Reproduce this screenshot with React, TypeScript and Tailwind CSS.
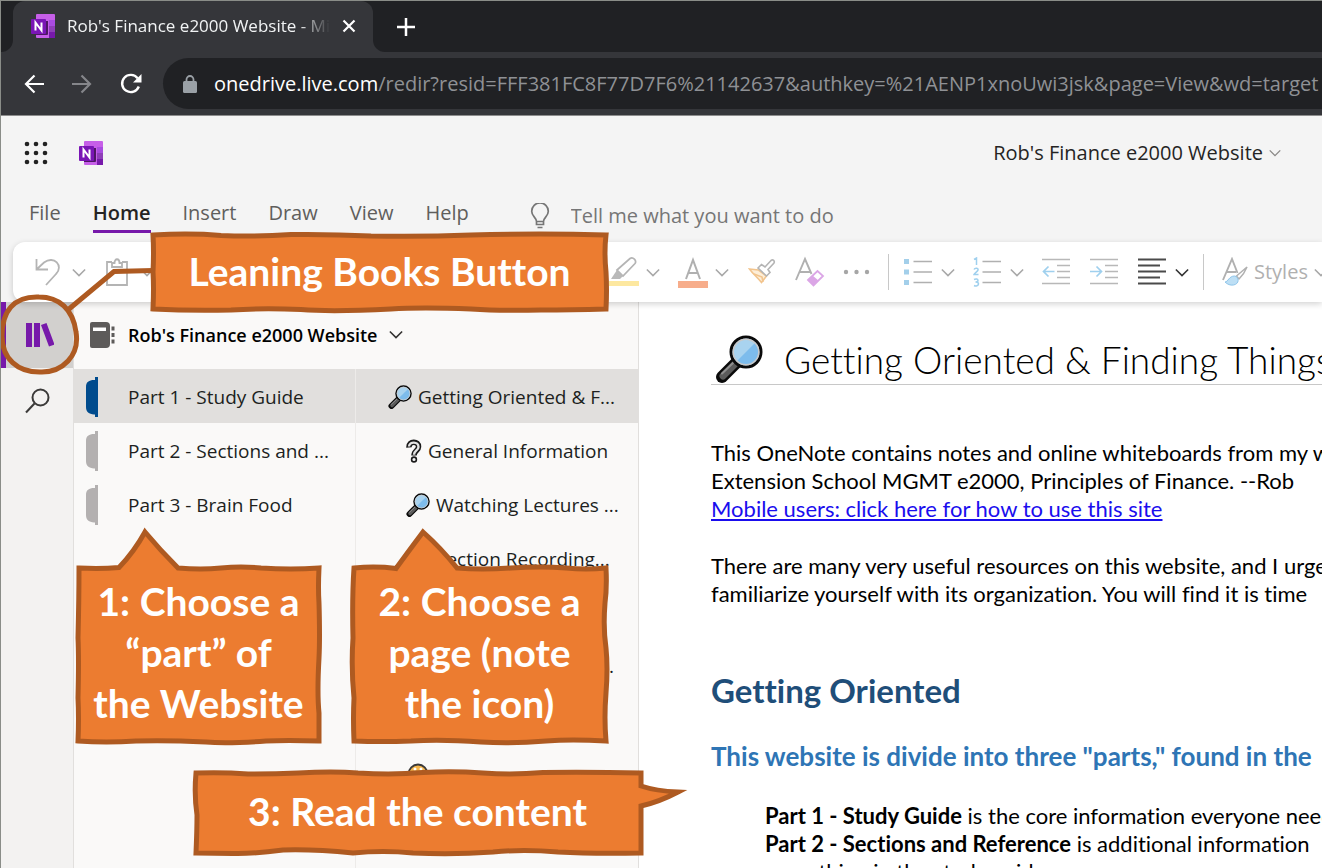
import type { ReactNode } from "react";

const UI = "font-['Open_Sans',sans-serif]";
const DOC = "font-['Lato',sans-serif] [font-variant-ligatures:none]";

function OneNoteLogo({ className }: { className: string }) {
  return (
    <svg viewBox="0 0 24 24" className={className} aria-hidden="true">
      <rect x="5" y="0" width="19" height="24" rx="1" fill="#c65fe8" />
      <rect x="18" y="6" width="6" height="6" fill="#a94be0" />
      <rect x="18" y="12" width="6" height="6" fill="#8f3fb8" />
      <rect x="18" y="18" width="6" height="6" fill="#7719aa" />
      <path d="M5 7h12v13a1 1 0 0 1-1 1H5z" fill="#4d1763" />
      <rect x="0" y="5" width="15" height="15" rx="1" fill="#7a15b5" />
      <path d="M4.500 16.500V8.500L10.500 16.500V8.500" fill="none" stroke="#fff" strokeWidth="2" />
    </svg>
  );
}

function Chevron({ className }: { className: string }) {
  return (
    <svg viewBox="0 0 16 10" className={className} fill="none" stroke="currentColor" strokeWidth="1.800" aria-hidden="true">
      <path d="M1 1.500l7 7 7-7" />
    </svg>
  );
}

function Magnifier({ className }: { className: string }) {
  return (
    <svg viewBox="0 0 48 48" className={className} aria-hidden="true">
      <path d="M22 27L7 42" stroke="#0a0a0a" strokeWidth="12" strokeLinecap="round" />
      <path d="M21 28L8 41" stroke="#5b5b5b" strokeWidth="7" strokeLinecap="round" />
      <path d="M19 27L7 38.500" stroke="#8f8f8f" strokeWidth="2" strokeLinecap="round" />
      <circle cx="31" cy="17" r="15" fill="#a9d3ef" stroke="#0a0a0a" strokeWidth="3" />
      <path d="M21.800 26.200L40.200 7.800A13 13 0 0 1 21.800 26.200z" fill="#7dbcec" />
      <circle cx="31" cy="17" r="12.800" fill="none" stroke="#c9c9c9" strokeWidth="1.500" />
    </svg>
  );
}

function QuestionMark() {
  return (
    <svg viewBox="0 0 16 24" className="h-6 w-4" aria-hidden="true">
      <path d="M3 8.500C2.500 1.500 13 1.500 12.500 8c0 3.500-4.500 3.500-4.500 8.500" fill="none" stroke="#1a1a1a" strokeWidth="5.500" />
      <path d="M3 7.500C3.500 2.200 12.500 2.200 12.500 8c0 3.500-4.500 3.500-4.500 7.700" fill="none" stroke="#e4e4e4" strokeWidth="2.400" />
      <circle cx="8" cy="20.500" r="2.400" fill="#f4f4f4" stroke="#1a1a1a" strokeWidth="1.600" />
    </svg>
  );
}

function Face() {
  return (
    <svg viewBox="0 0 22 22" className="size-[22px]" aria-hidden="true">
      <circle cx="11" cy="11" r="9.500" fill="#f5b54a" stroke="#3a3a3a" strokeWidth="1.800" />
      <circle cx="8" cy="6" r="1.500" fill="#fff" />
      <circle cx="14" cy="6" r="1.500" fill="#fff" />
    </svg>
  );
}

function SectionTab({ className }: { className: string }) {
  return (
    <svg viewBox="0 0 14 40" className={className} fill="currentColor" aria-hidden="true">
      <path d="M10 0h3v40h-3v-2.500H9C4 37 1 35 1 30V10C1 5 4 3 9 3h1z" />
    </svg>
  );
}

function BrowserBar() {
  return (
    <header className={`shrink-0 text-white ${UI}`}>
      <div className="flex h-[51px] items-center bg-[#202124]">
        <div className="h-full w-3 shrink-0 bg-[#35363a]">
          <div className="h-full rounded-br-[12px] bg-[#202124]" />
        </div>
        <div className="flex h-full w-[360px] shrink-0 items-center rounded-t-[12px] bg-[#35363a] pb-[2px] pl-[18px] pr-[17px]">
          <OneNoteLogo className="size-6 shrink-0" />
          <span className="ml-3 flex-1 overflow-hidden whitespace-nowrap text-[17px] leading-6 text-[#f1f3f4] [mask-image:linear-gradient(to_right,black_88%,transparent)]">
            Rob's Finance e2000 Website - Microsoft OneNote Online
          </span>
          <button aria-label="Close tab" className="ml-3 shrink-0">
            <svg viewBox="0 0 14 14" className="size-[14px]" stroke="#fff" strokeWidth="2.200" aria-hidden="true">
              <path d="M1.500 1.500l11 11M12.500 1.500l-11 11" />
            </svg>
          </button>
        </div>
        <div className="h-full flex-1 bg-[#35363a]">
          <div className="flex h-full items-center rounded-bl-[12px] bg-[#202124] pl-6">
            <button aria-label="New tab">
              <svg viewBox="0 0 18 18" className="size-[18px]" stroke="#fff" strokeWidth="2.500" aria-hidden="true">
                <path d="M9 0v18M0 9h18" />
              </svg>
            </button>
          </div>
        </div>
      </div>
      <div className="flex h-16 items-center border-b border-[#8d8d8d] bg-[#35363a] pl-[23px]">
        <button aria-label="Back" className="shrink-0">
          <svg viewBox="0 0 20 20" className="size-5" fill="none" stroke="#fff" strokeWidth="2.200" aria-hidden="true">
            <path d="M20 10H2M10.500 1.500L2 10l8.500 8.500" />
          </svg>
        </button>
        <button aria-label="Forward" className="ml-7 shrink-0">
          <svg viewBox="0 0 20 20" className="size-5" fill="none" stroke="#85868a" strokeWidth="2.200" aria-hidden="true">
            <path d="M0 10h18M9.500 1.500L18 10l-8.500 8.500" />
          </svg>
        </button>
        <button aria-label="Reload" className="ml-7 shrink-0">
          <svg viewBox="0 0 22 22" className="size-[22px]" fill="none" stroke="#fff" strokeWidth="2.400" aria-hidden="true">
            <path d="M18.800 13.500A8.600 8.600 0 1 1 17.600 5.300" />
            <path d="M21.500 1v8.500H13z" fill="#fff" stroke="none" />
          </svg>
        </button>
        <div className="ml-[21px] flex h-[51px] flex-1 items-center overflow-hidden rounded-l-full bg-[#202124] pl-5">
          <svg viewBox="0 0 14 18" className="h-[18px] w-[14px] shrink-0" aria-hidden="true">
            <rect x="0" y="6" width="14" height="12" rx="1.500" fill="#9aa0a6" />
            <path d="M3.500 7V4.500a3.500 3.500 0 0 1 7 0V7" fill="none" stroke="#9aa0a6" strokeWidth="1.800" />
          </svg>
          <span className="ml-[17px] whitespace-nowrap text-[20px] leading-7 text-[#8f9195]">
            <span className="text-white">onedrive.live.com</span>
            /redir?resid=FFF381FC8F77D7F6%21142637&amp;authkey=%21AENP1xnoUwi3jsk&amp;page=View&amp;wd=target
          </span>
        </div>
      </div>
    </header>
  );
}

function AppHeader() {
  const item = "shrink-0 text-[20px] leading-7 text-[#605e5c]";
  return (
    <div className={`shrink-0 bg-[#f4f4f4] ${UI}`}>
      <div className="flex h-[74px] items-center pl-[23px] pr-[41px]">
        <button aria-label="App launcher">
          <svg viewBox="0 0 24 24" className="size-6" fill="#222" aria-hidden="true">
            {[3, 12, 21].map((y) =>
              [3, 12, 21].map((x) => <circle key={`${x}-${y}`} cx={x} cy={y} r="2.300" />)
            )}
          </svg>
        </button>
        <OneNoteLogo className="ml-[31px] size-6" />
        <button className="ml-auto flex items-center gap-[6px] whitespace-nowrap text-[20px] leading-7 text-[#252423]">
          Rob's Finance e2000 Website
          <Chevron className="h-2 w-3 text-[#8a8886]" />
        </button>
      </div>
      <nav className="flex h-[52px] items-start pl-7 pt-[9px]">
        <button className={item}>File</button>
        <button className="ml-8 shrink-0 border-b-[3px] border-[#7719aa] pb-[3px] text-[20px] font-semibold leading-7 text-[#252423]">
          Home
        </button>
        <button className={`ml-8 ${item}`}>Insert</button>
        <button className={`ml-8 ${item}`}>Draw</button>
        <button className={`ml-8 ${item}`}>View</button>
        <button className={`ml-8 ${item}`}>Help</button>
        <label className="ml-[61px] flex min-w-0 flex-1 items-center gap-[21px] pt-px">
          <svg viewBox="0 0 20 26" className="h-[26px] w-5 shrink-0" fill="none" stroke="#767676" strokeWidth="1.700" aria-hidden="true">
            <path d="M6.500 18.500c0-4-4.800-5-4.800-10.300a8.300 8.300 0 0 1 16.600 0c0 5.300-4.800 6.300-4.800 10.300zM6.500 18.500v3h7v-3M7.500 24.500h5" />
          </svg>
          <input
            aria-label="Tell me what you want to do"
            placeholder="Tell me what you want to do"
            className="h-8 w-full bg-transparent text-[20px] leading-8 text-[#555] outline-none placeholder:text-[#767676]"
          />
        </label>
      </nav>
    </div>
  );
}

function Lines({ indent }: { indent: "out" | "in" }) {
  return (
    <svg viewBox="0 0 28 28" className="size-7" fill="none" aria-hidden="true">
      <path d="M0 1.500h28M15 7.500h13M15 13.500h13M15 19.500h13M0 25.500h28" stroke="#b8b8b8" strokeWidth="1.700" />
      <path d={indent === "out" ? "M12.500 13.500H2M6.500 8.500l-5 5 5 5" : "M0 13.500h11M6.500 8.500l5 5-5 5"} stroke="#9fd0ee" strokeWidth="1.700" />
    </svg>
  );
}

function Ribbon() {
  const chev = "h-[9px] w-[14px] text-[#a8a8a8]";
  return (
    <div className="relative z-10 shrink-0 bg-[#f4f4f4] pl-3">
      <div
        role="toolbar"
        aria-label="Home"
        className={`flex h-[60px] items-center overflow-hidden rounded-l-[12px] bg-white pl-[21px] shadow-[0_2px_6px_rgba(0,0,0,0.18)] ${UI}`}
      >
        <button aria-label="Undo" className="flex shrink-0 items-center gap-[10px]">
          <svg viewBox="0 0 28 28" className="size-7" fill="none" stroke="#b4b4b4" strokeWidth="1.800" aria-hidden="true">
            <path d="M2.500 1v10.500H14M2.500 11.500L10 4.500C20-3 30 8 22 16L12 27" />
          </svg>
          <Chevron className={chev} />
        </button>
        <button aria-label="Paste" className="ml-5 flex shrink-0 items-center gap-3">
          <svg viewBox="0 0 22 28" className="h-7 w-[22px]" fill="none" stroke="#b4b4b4" strokeWidth="1.800" aria-hidden="true">
            <path d="M6 4H1v23h20V4h-5M6 9V5h2.500c0-5 5-5 5 0H16v4z" />
          </svg>
          <Chevron className={chev} />
        </button>
        <button aria-label="Highlighter" className="ml-[455px] flex shrink-0 items-center gap-[7px]">
          <svg viewBox="0 0 30 32" className="h-8 w-[30px]" fill="none" aria-hidden="true">
            <rect x="0" y="25" width="30" height="5" fill="#fde8a0" />
            <path d="M8 14L21 2.500c3-2 7 2 5 5L14 20z" stroke="#b4b4b4" strokeWidth="1.700" />
            <path d="M8 14l6 6-3 3H2z" fill="#b9b9b9" />
          </svg>
          <Chevron className={chev} />
        </button>
        <button aria-label="Font colour" className="ml-[18px] flex shrink-0 items-center gap-[7px]">
          <svg viewBox="0 0 30 32" className="h-8 w-[30px]" fill="none" aria-hidden="true">
            <rect x="0" y="25" width="30" height="7" fill="#f7ad8b" />
            <path d="M8 23L15 4l7 19M10.500 17h9" stroke="#b0b0b0" strokeWidth="2" />
          </svg>
          <Chevron className={chev} />
        </button>
        <button aria-label="Format painter" className="ml-[19px] shrink-0">
          <svg viewBox="0 0 28 26" className="h-[26px] w-7" fill="none" strokeWidth="1.600" aria-hidden="true">
            <path d="M1.500 10l9 1 8 6-5 6.500C9 18 5 15 1.500 10z" fill="#fdeed8" stroke="#f2c48d" />
            <path d="M6 15l8 3 1 5" stroke="#f2c48d" />
            <path d="M10 9l3.500-3.500L17 8l6-6.500c2-1.500 4 .5 3 2.500l-6 6.500 2 3-3.500 3.500z" fill="#fff" stroke="#b4b4b4" />
          </svg>
        </button>
        <button aria-label="Clear formatting" className="ml-[19px] shrink-0">
          <svg viewBox="0 0 30 32" className="h-8 w-[30px]" fill="none" aria-hidden="true">
            <path d="M1 24L10 3l6.500 15M4.500 16h11" stroke="#b0b0b0" strokeWidth="1.900" />
            <path d="M13 24L22.500 15l5.500 5-9.500 9.500z" fill="#fff" stroke="#dba6e6" strokeWidth="1.800" />
            <path d="M13 24l4.500-4.500 6 5-5 5z" fill="#dba6e6" />
          </svg>
        </button>
        <button aria-label="More font options" className="ml-[18px] shrink-0">
          <svg viewBox="0 0 28 6" className="h-[6px] w-7" fill="#a6a6a6" aria-hidden="true">
            <circle cx="3" cy="3" r="2.200" />
            <circle cx="13.500" cy="3" r="2.200" />
            <circle cx="24" cy="3" r="2.200" />
          </svg>
        </button>
        <div className="ml-[17px] h-9 w-px shrink-0 bg-[#c8c8c8]" />
        <button aria-label="Bullets" className="ml-[15px] flex shrink-0 items-center gap-[9px]">
          <svg viewBox="0 0 28 28" className="size-7" aria-hidden="true">
            <path d="M0 1h5v5H0zM0 11.500h5v5H0zM0 22h5v5H0z" fill="#a3cfea" />
            <path d="M9.500 3.500H28M9.500 14H28M9.500 24.500H28" stroke="#b0b0b0" strokeWidth="1.700" />
          </svg>
          <Chevron className={chev} />
        </button>
        <button aria-label="Numbering" className="ml-[18px] flex shrink-0 items-center gap-[9px]">
          <svg viewBox="0 0 28 30" className="h-[30px] w-7" aria-hidden="true">
            <g fill="none" stroke="#9fd0ee" strokeWidth="1.500">
              <path d="M1 2.500L3.500 1v7M1 12.500c1-2 4.500-1.500 4 .5-.3 1.500-3.500 3-4 4.500h4.500M1 22.500c2-1 4-.5 4 1s-2 1.500-2.500 1.500c2 0 3 .5 3 2s-2.500 2.500-4.500 1.500" />
            </g>
            <path d="M9.500 4.500H28M9.500 15H28M9.500 25.500H28" stroke="#b0b0b0" strokeWidth="1.700" />
          </svg>
          <Chevron className={chev} />
        </button>
        <button aria-label="Decrease indent" className="ml-[18px] shrink-0">
          <Lines indent="out" />
        </button>
        <button aria-label="Increase indent" className="ml-5 shrink-0">
          <Lines indent="in" />
        </button>
        <button aria-label="Align" className="ml-5 flex shrink-0 items-center gap-[9px]">
          <svg viewBox="0 0 28 28" className="size-7" stroke="#4a4a4a" strokeWidth="1.900" aria-hidden="true">
            <path d="M0 1.500h28M0 7.500h22M0 13.500h28M0 19.500h22M0 25.500h28" />
          </svg>
          <Chevron className="h-[9px] w-[14px] text-[#333]" />
        </button>
        <div className="ml-[14px] h-9 w-px shrink-0 bg-[#c8c8c8]" />
        <button className="ml-[18px] flex shrink-0 items-center gap-[6px] text-[20px] leading-7 text-[#b0b0b0]">
          <svg viewBox="0 0 26 30" className="h-[30px] w-[26px]" fill="none" aria-hidden="true">
            <path d="M1 23L10 2l5.500 14M5 15h9" stroke="#b0b0b0" strokeWidth="1.900" />
            <path d="M25 10L14.500 19l2.500 3c3-3 6-7 8-12z" fill="#fff" stroke="#b0b0b0" strokeWidth="1.500" />
            <path d="M3 25c3 0 4-6 9.500-6 5 1 5 8-1 9-3 .5-6-.5-8.500-3z" fill="#bddff5" stroke="#8fc5ea" />
          </svg>
          Styles
          <Chevron className={chev} />
        </button>
      </div>
    </div>
  );
}

const sections = ["Part 1 - Study Guide", "Part 2 - Sections and ...", "Part 3 - Brain Food"];

const pages: { title: string; icon: ReactNode; level: 0 | 1 }[] = [
  { title: "Getting Oriented & F...", icon: <Magnifier className="size-6" />, level: 0 },
  { title: "General Information", icon: <QuestionMark />, level: 1 },
  { title: "Watching Lectures ...", icon: <Magnifier className="size-6" />, level: 1 },
  { title: "Section Recording...", icon: <Magnifier className="size-6" />, level: 1 },
];

function Navigation() {
  return (
    <>
      <nav aria-label="Views" className="w-[73px] shrink-0 border-r border-[#e1dfdd] bg-[#f3f2f1]">
        <button
          aria-label="Navigation"
          className="flex h-[66px] w-full items-center border-l-[5px] border-[#7719aa] bg-[#d2d0ce] pl-5"
        >
          <svg viewBox="0 0 28 26" className="h-[26px] w-7" fill="#7719aa" aria-hidden="true">
            <path d="M0 1h6v24H0zM8 1h6v24H8zM15 3l5.500-2 8 21.500-5.500 2z" />
          </svg>
        </button>
        <button aria-label="Search" className="flex h-[66px] w-full items-center pl-6">
          <svg viewBox="0 0 26 26" className="size-[26px]" fill="none" stroke="#3b3a39" strokeWidth="2" aria-hidden="true">
            <circle cx="15.500" cy="9.500" r="8" />
            <path d="M9.500 15.500L1 24.500" />
          </svg>
        </button>
      </nav>
      <aside className={`flex w-[565px] shrink-0 flex-col border-r border-[#e1dfdd] bg-[#faf9f8] text-black ${UI}`}>
        <button className="flex h-[67px] shrink-0 items-center pb-[2px] pl-4 text-[18px] font-semibold leading-7">
          <svg viewBox="0 0 26 26" className="h-[26px] w-[26px]" aria-hidden="true">
            <path d="M2 0h14a4 4 0 0 1 4 4v18a4 4 0 0 1-4 4H2a2 2 0 0 1-2-2V2a2 2 0 0 1 2-2z" fill="#5d5b5a" />
            <path d="M3 5.500h13v3.500H3z" fill="#fff" />
            <path d="M21.500 4.500h3v4h-3zM21.500 11h3v4h-3zM21.500 17.500h3v4h-3z" fill="#5d5b5a" />
          </svg>
          <span className="ml-3 whitespace-nowrap">Rob's Finance e2000 Website</span>
          <Chevron className="ml-3 h-[9px] w-[14px] text-[#323130]" />
        </button>
        <div className="grid flex-1 grid-cols-2 whitespace-nowrap text-[19px] leading-7 text-[#201f1e]">
          <ul aria-label="Sections" className="min-w-0 border-r border-[#edebe9]">
            {sections.map((name, i) => (
              <li key={name}>
                <button
                  className={`flex h-[54px] w-full items-center pl-[11px] pt-px text-left ${i === 0 ? "bg-[#e1dfdd]" : ""}`}
                >
                  <SectionTab className={`h-10 w-[14px] shrink-0 ${i === 0 ? "text-[#004b8d]" : "text-[#b3b0b0]"}`} />
                  <span className="ml-[29px]">{name}</span>
                </button>
              </li>
            ))}
          </ul>
          <ul aria-label="Pages" className="min-w-0">
            {pages.map((page, i) => (
              <li key={page.title}>
                <button
                  className={`flex h-[54px] w-full items-center gap-[6px] pt-px text-left ${
                    page.level === 0 ? "pl-8" : "pl-[50px]"
                  } ${i === 0 ? "bg-[#e1dfdd]" : ""}`}
                >
                  <span className="shrink-0">{page.icon}</span>
                  <span>{page.title}</span>
                </button>
              </li>
            ))}
            <li className="h-[54px]" />
            <li className="flex h-[54px] items-center justify-end pr-6">...</li>
            <li className="h-[54px]" />
            <li className="flex h-[54px] items-center pl-[51px]">
              <Face />
            </li>
          </ul>
        </div>
      </aside>
    </>
  );
}

function Page() {
  return (
    <main className={`min-w-0 flex-1 overflow-hidden whitespace-nowrap bg-white pl-[72px] text-[22px] leading-[28px] text-black ${DOC}`}>
      <div className="flex h-[83px] items-end border-b border-[#c8c8c8] pb-px">
        <Magnifier className="ml-1 size-12 shrink-0" />
        <h1 className="ml-[21px] text-[37px] font-light leading-[46px]">Getting Oriented &amp; Finding Things</h1>
      </div>
      <p className="mt-[54px]">
        This OneNote contains notes and online whiteboards from my work
        <br />
        Extension School MGMT e2000, Principles of Finance. --Rob
      </p>
      <p>
        <a href="#mobile" className="text-[#1a0dee] underline">
          Mobile users: click here for how to use this site
        </a>
      </p>
      <p className="mt-[29px]">
        There are many very useful resources on this website, and I urge
        <br />
        familiarize yourself with its organization. You will find it is time
      </p>
      <h2 className="mt-[62px] text-[33px] font-bold leading-10 text-[#1f4e79]">Getting Oriented</h2>
      <h3 className="mt-7 text-[26px] font-bold leading-9 text-[#2e75b5]">
        This website is divide into three "parts," found in the
      </h3>
      <p className="mt-7 pl-[54px]">
        <b>Part 1 - Study Guide</b> is the core information everyone needs
        <br />
        <b>Part 2 - Sections and Reference</b> is additional information
        <br />
        everything in the study guide
      </p>
    </main>
  );
}

function Callout({ box, view, path, children }: { box: string; view: string; path: string; children: ReactNode }) {
  return (
    <div className={`absolute ${box}`}>
      <svg viewBox={view} className="absolute inset-0 size-full overflow-visible" aria-hidden="true">
        <path d={path} fill="#ec7c30" stroke="#ae5a21" strokeWidth="5" />
      </svg>
      <div className="relative whitespace-nowrap text-center text-[39px] font-bold leading-[51px] text-white">{children}</div>
    </div>
  );
}

export default function App() {
  return (
    <div className="relative flex h-screen flex-col overflow-hidden border-l border-t border-[#8a8d88] bg-white">
      <BrowserBar />
      <AppHeader />
      <Ribbon />
      <div className="flex min-h-0 flex-1">
        <Navigation />
        <Page />
      </div>

      <div className={`pointer-events-none absolute inset-0 z-20 ${DOC}`}>
        <svg viewBox="0 0 155 110" className="absolute left-0 top-[265px] h-[110px] w-[155px]" fill="none" stroke="#ae5a21" strokeWidth="5" aria-hidden="true">
          <path d="M38 31C58 31 72 43 75 66C79 90 61 106 41 106C16 107 1 92 1 70C1 46 12 30 38 31zM68 43L113 5.500L152 4.500" />
        </svg>
        <Callout
          box="left-[150px] top-[231px] w-[457px] pt-[14px] pb-[14px]"
          view="0 0 457 79"
          path="M2 3Q40 1 70 3.500Q105 5 140 2.500Q180 2 220 4Q270 5 320 3Q390 1 455 3Q453 20 455 40Q456 58 455 77Q420 78 390 78Q350 79 320 77Q270 75 240 77Q180 80 150 77.500Q110 76 80 78Q40 79 2 77Q3 55 2 40Q3 20 2 3z"
        >
          Leaning Books Button
        </Callout>
        <Callout
          box="left-[75px] top-[527px] w-[245px] pt-[48px] pb-[16px]"
          view="0 0 245 217"
          path="M3 40Q25 41 43 39.500Q58 24 69 4Q84 22 102 40Q125 42 145 40Q165 38 185 40Q215 42 243 40Q242 60 243 75Q244 110 243 130Q241 165 243 185V213Q210 212 190 213Q150 216 130 214Q90 212 60 213Q30 215 2 213Q3 190 2 170Q3 130 2 110Q3 70 3 40z"
        >
          1: Choose a
          <br />
          “part” of
          <br />
          the Website
        </Callout>
        <Callout
          box="left-[350px] top-[527px] w-[257px] pt-[48px] pb-[16px]"
          view="0 0 257 217"
          path="M3 40Q25 38 45 40.500Q57 24 72 4Q90 20 106 40Q130 42 160 40Q190 38 215 40Q235 42 255 40Q256 60 254 75Q252 100 255 120Q257 140 255 165Q253 190 255 213Q220 211 195 213Q160 216 130 214Q90 211 60 213Q30 214 3 213Q2 190 3 170Q0 140 2 110Q1 70 3 40z"
        >
          2: Choose a
          <br />
          page (note
          <br />
          the icon)
        </Callout>
        <Callout
          box="left-[192px] top-[769px] w-[449px] pt-[16px] pb-[18px]"
          view="0 0 449 85"
          path="M3 3Q30 2 55 4Q80 4 105 3Q140 1 165 3Q200 5 230 2.500Q260 1 290 3Q320 5 350 2.500Q400 2 448 3V16Q463 21 485 22Q466 32 448 36V83Q400 84 365 82Q330 79 300 82Q260 85 220 83Q190 80 160 83Q120 79 90 80Q60 84 40 83.500Q20 83 3 83Q4 60 4 45Q1 25 3 3z"
        >
          3: Read the content
        </Callout>
      </div>
    </div>
  );
}
